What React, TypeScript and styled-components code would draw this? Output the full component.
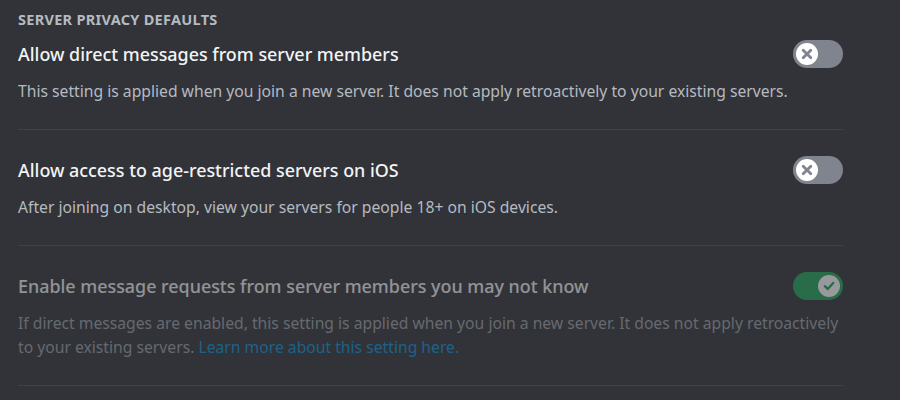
import React from "react";
import styled, { createGlobalStyle } from "styled-components";

const Global = createGlobalStyle`
  html, body { margin: 0; padding: 0; background: #313338; }
  body { font-family: "Noto Sans", "Open Sans", sans-serif; -webkit-font-smoothing: antialiased; }
`;

const Page = styled.div`
  width: 825px;
  padding: 9px 0 0 18px;
`;

const SectionHeader = styled.h2`
  margin: 0 0 11px;
  font-size: 14.5px;
  line-height: 20px;
  font-weight: 700;
  letter-spacing: 0.02em;
  text-transform: uppercase;
  color: #b5bac1;
`;

const Setting = styled.div<{ $disabled?: boolean }>`
  padding-bottom: 26px;
  border-bottom: 1px solid #3f4147;
  margin-bottom: 26px;
  & > div:first-child { opacity: ${(p) => (p.$disabled ? 0.5 : 1)}; }
  & > div:last-child { opacity: ${(p) => (p.$disabled ? 0.4 : 1)}; }
`;

const TitleRow = styled.div`
  display: flex;
  align-items: center;
  justify-content: space-between;
  height: 28px;
`;

const Title = styled.div`
  font-size: 17.9px;
  line-height: 24px;
  font-weight: 500;
  color: #f2f3f5;
`;

const Description = styled.div`
  margin-top: 11px;
  font-size: 15.7px;
  line-height: 24px;
  color: #b5bac1;
`;

const Link = styled.a`
  color: #00a8fc;
  text-decoration: none;
`;

const Track = styled.div<{ $on: boolean }>`
  width: 50px;
  height: 28px;
  border-radius: 14px;
  background: ${(p) => (p.$on ? "#23a55a" : "#80848e")};
  display: flex;
  align-items: center;
  justify-content: ${(p) => (p.$on ? "flex-end" : "flex-start")};
  padding: 0 3px;
  box-sizing: border-box;
  flex-shrink: 0;
`;

const Knob = styled.div`
  width: 22px;
  height: 22px;
  border-radius: 50%;
  background: #ffffff;
  display: flex;
  align-items: center;
  justify-content: center;
`;

function Toggle({ on }: { on: boolean }) {
  return (
    <Track $on={on}>
      <Knob>
        {on ? (
          <svg width="16" height="16" viewBox="0 0 16 16">
            <path d="M3.8 8.2 L6.8 11 L12.2 5" fill="none" stroke="#23a55a" strokeWidth="2.4" strokeLinecap="round" strokeLinejoin="round" />
          </svg>
        ) : (
          <svg width="16" height="16" viewBox="0 0 16 16">
            <path d="M4.2 4.2 L11.8 11.8 M11.8 4.2 L4.2 11.8" fill="none" stroke="#80848e" strokeWidth="2.8" strokeLinecap="round" />
          </svg>
        )}
      </Knob>
    </Track>
  );
}

export default function App() {
  return (
    <Page>
      <Global />
      <SectionHeader>Server Privacy Defaults</SectionHeader>
      <Setting>
        <TitleRow>
          <Title>Allow direct messages from server members</Title>
          <Toggle on={false} />
        </TitleRow>
        <Description>
          This setting is applied when you join a new server. It does not apply retroactively to your existing servers.
        </Description>
      </Setting>
      <Setting>
        <TitleRow>
          <Title>Allow access to age-restricted servers on iOS</Title>
          <Toggle on={false} />
        </TitleRow>
        <Description>After joining on desktop, view your servers for people 18+ on iOS devices.</Description>
      </Setting>
      <Setting $disabled>
        <TitleRow>
          <Title>Enable message requests from server members you may not know</Title>
          <Toggle on={true} />
        </TitleRow>
        <Description>
          If direct messages are enabled, this setting is applied when you join a new server. It does not apply retroactively to your existing servers.{" "}
          <Link href="#">Learn more about this setting here.</Link>
        </Description>
      </Setting>
    </Page>
  );
}
